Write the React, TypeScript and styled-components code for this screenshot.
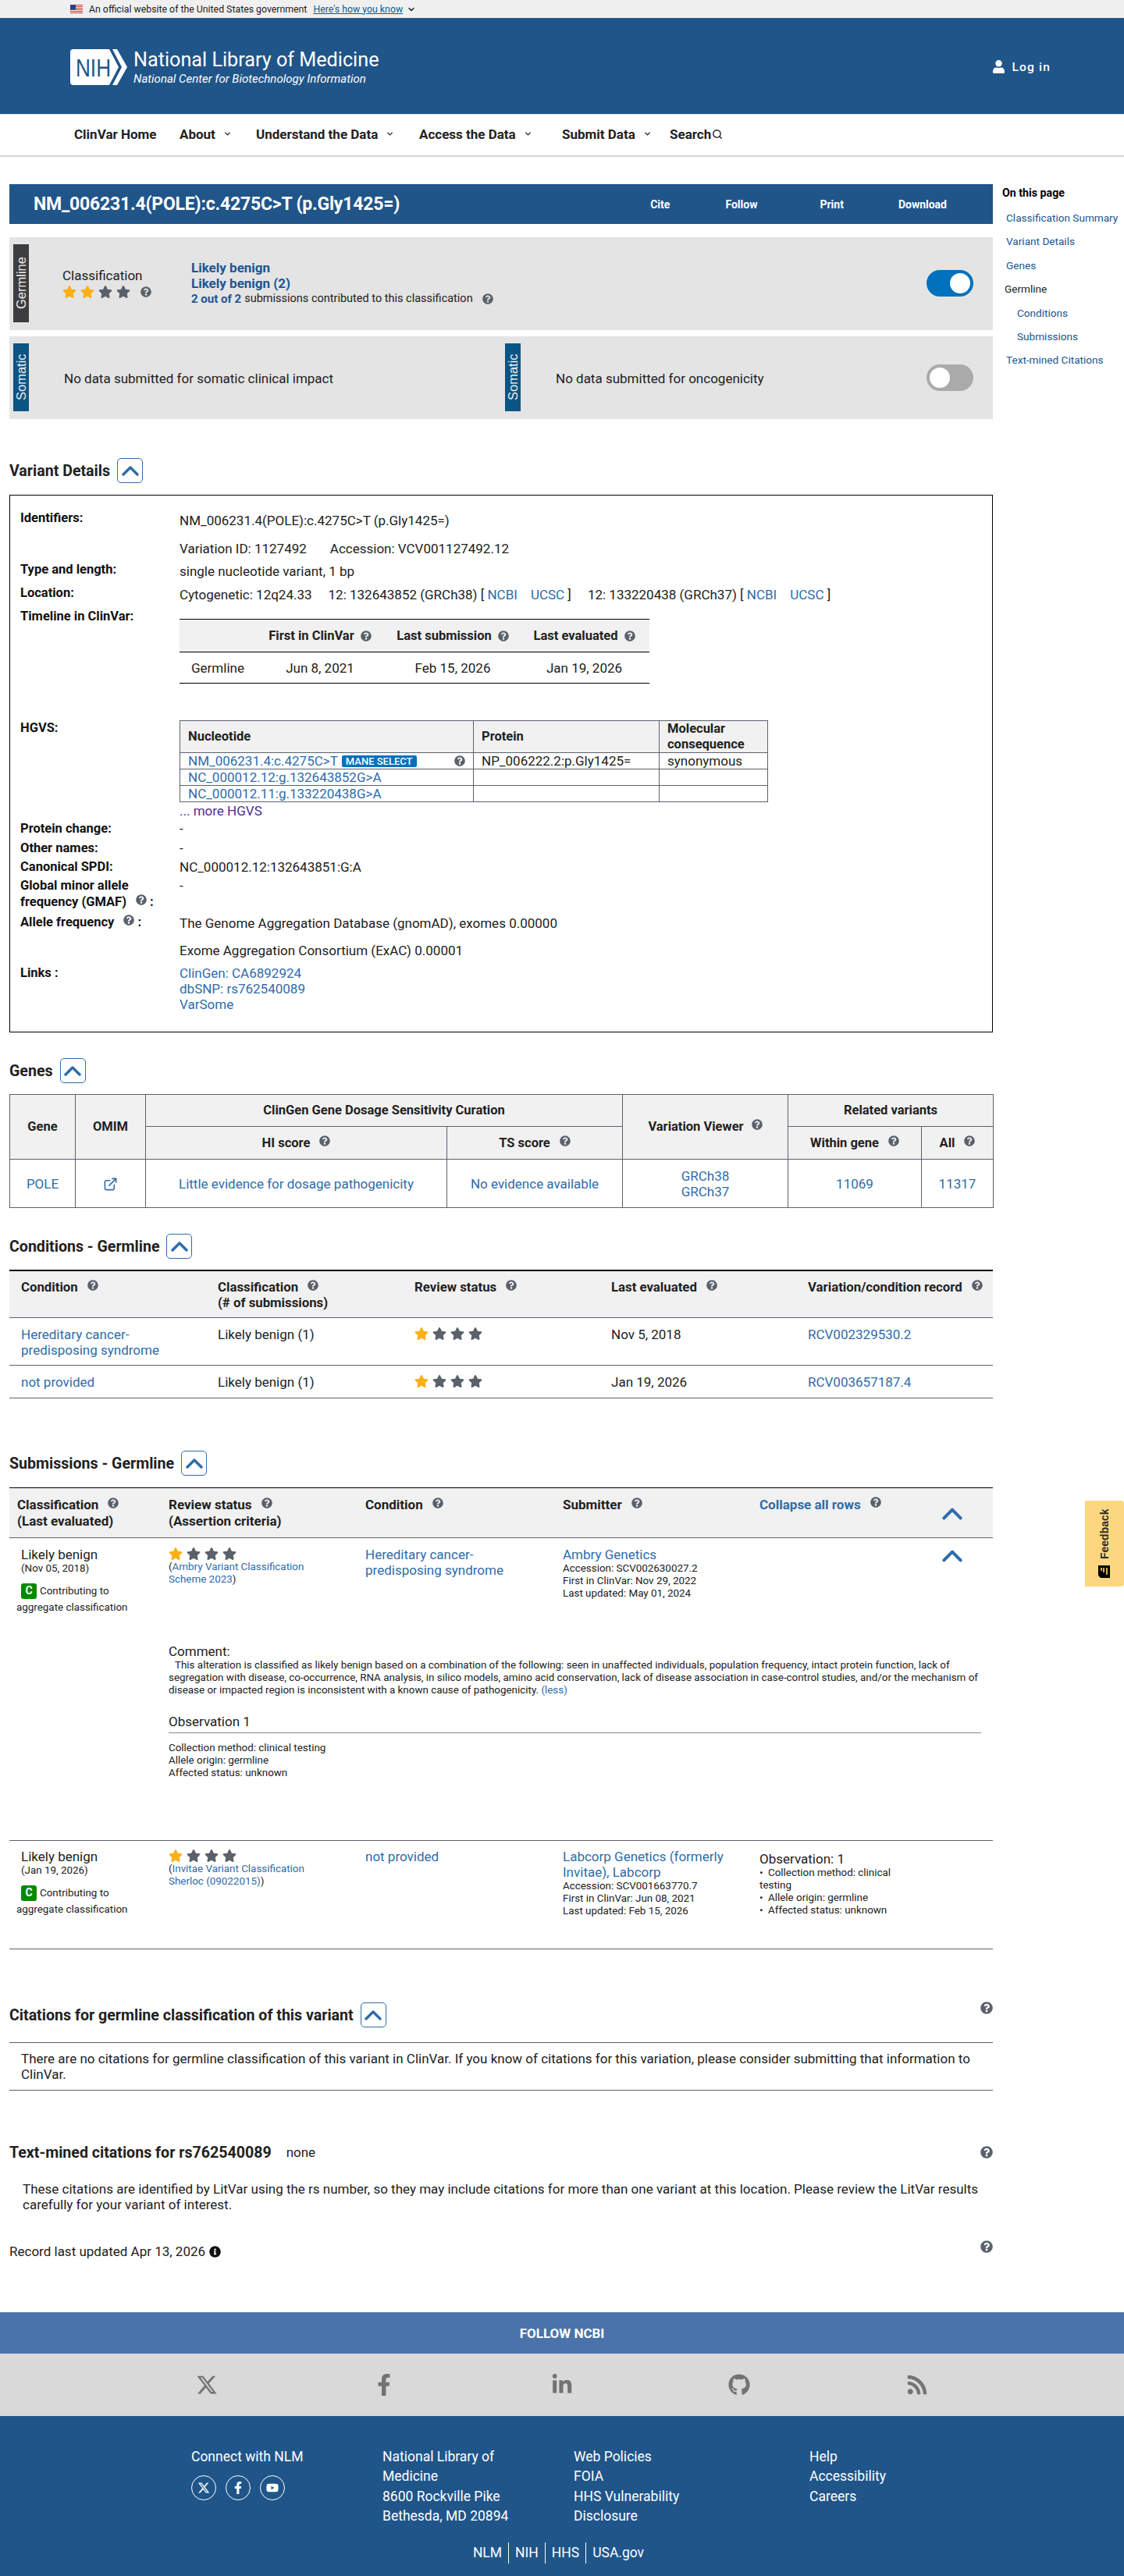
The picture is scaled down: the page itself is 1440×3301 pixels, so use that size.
import React from 'react';
import styled, { createGlobalStyle } from 'styled-components';
import { ChevronDown, Search, ExternalLink } from 'lucide-react';
import {
    FaQuestionCircle,
    FaStar,
    FaUser,
    FaFacebookF,
    FaLinkedinIn,
    FaGithub,
    FaRss,
    FaInfoCircle,
    FaYoutube,
} from 'react-icons/fa';
import { FaXTwitter } from 'react-icons/fa6';

const NAVY = '#20558a';
const LINK = '#2e6cab';
const SLATE = '#5b616b';

const GlobalStyle = createGlobalStyle`
    html, body {
        margin: 0;
        padding: 0;
        background: #fff;
    }
    body {
        font-family: Roboto, "Liberation Sans", sans-serif;
        color: #212121;
        font-size: 17px;
    }
    * {
        box-sizing: border-box;
    }
`;

const Page = styled.div`
    position: relative;
    width: 1440px;
    height: 3301px;
    overflow: hidden;
`;

const GovBanner = styled.div`
    height: 23px;
    background: #f0f0f0;
    padding-left: 90px;
    display: flex;
    align-items: center;
    font-size: 12.3px;
    color: #1b1b1b;
`;

const GovLink = styled.a`
    color: #005ea2;
    text-decoration: underline;
    margin-left: 8px;
`;

const GovChevron = styled(ChevronDown)`
    width: 12px;
    height: 12px;
    margin-left: 5px;
    stroke-width: 3;
`;

const FlagIcon = styled.svg`
    width: 16px;
    height: 11px;
    margin-right: 8px;
`;

const Header = styled.header`
    height: 124px;
    background: ${NAVY};
    border-bottom: 1px solid #dfe6ee;
    padding: 2px 94px 0 90px;
    display: flex;
    align-items: center;
    justify-content: space-between;
    color: #fff;
`;

const Brand = styled.div`
    display: flex;
    align-items: center;
    gap: 8px;
`;

const BrandText = styled.div`
    display: flex;
    flex-direction: column;
`;

const BrandTitle = styled.div`
    font-size: 25.2px;
    line-height: 30px;
`;

const BrandSub = styled.div`
    font-size: 15px;
    line-height: 18px;
    font-style: italic;
`;

const Login = styled.div`
    display: flex;
    align-items: center;
    gap: 8px;
    font-size: 15.5px;
    font-weight: 500;
    letter-spacing: 1.2px;
`;

const Nav = styled.nav`
    height: 54px;
    border-bottom: 2px solid #d6d6d6;
    padding: 0 0 3px 95px;
    display: flex;
    align-items: center;
`;

const NavItem = styled.div<{ $width: number }>`
    width: ${p => p.$width}px;
    display: flex;
    align-items: center;
    font-size: 17px;
    font-weight: 700;
    color: #212121;
`;

const NavChevron = styled(ChevronDown)`
    width: 11px;
    height: 11px;
    margin-left: 10px;
    stroke-width: 3;
`;

const NavSearch = styled(Search)`
    width: 14px;
    height: 14px;
    margin-left: 1px;
    stroke-width: 2.4;
`;

const Content = styled.div`
    display: flex;
    padding: 35px 0 0 12px;
`;

const Main = styled.main`
    width: 1260px;
`;

const Aside = styled.aside`
    margin-left: 12px;
    width: 156px;
    padding-top: 1px;
`;

const AsideTitle = styled.div`
    font-size: 14.2px;
    font-weight: 700;
    color: #000;
    line-height: 20px;
    margin-bottom: 12px;
`;

const AsideItem = styled.a<{ $indent?: number; $plain?: boolean }>`
    display: block;
    height: 30.4px;
    line-height: 20px;
    padding-left: ${p => p.$indent ?? 5}px;
    font-size: 13.6px;
    color: ${p => (p.$plain ? '#212121' : '#205493')};
`;

const TitleBar = styled.div`
    height: 51px;
    background: ${NAVY};
    color: #fff;
    padding: 0 59px 0 31px;
    display: flex;
    align-items: center;
`;

const PageTitle = styled.h1`
    margin: 0;
    font-size: 23px;
    font-weight: 700;
    letter-spacing: -0.2px;
`;

const TitleActions = styled.div`
    margin-left: auto;
    display: flex;
`;

const TitleAction = styled.a<{ $gap: number }>`
    font-size: 14px;
    font-weight: 700;
    margin-left: ${p => p.$gap}px;
`;

const Panel = styled.section<{ $top: number; $height: number }>`
    margin-top: ${p => p.$top}px;
    height: ${p => p.$height}px;
    background: #e4e4e4;
    display: flex;
    padding: 9px 25px 10px 5px;
    align-items: flex-start;
`;

const SideTag = styled.div<{ $dark?: boolean }>`
    flex: none;
    width: 20px;
    height: 100%;
    background: ${p => (p.$dark ? '#3d3d3f' : '#0b5584')};
    color: #f0f0f0;
    font-family: "Liberation Sans", Arial, sans-serif;
    font-size: 16.5px;
    writing-mode: vertical-rl;
    transform: rotate(180deg);
    display: flex;
    align-items: center;
    justify-content: center;
`;

const PanelRow = styled.div`
    align-self: stretch;
    display: flex;
    align-items: center;
`;

const ClassificationBlock = styled.div`
    width: 165px;
    margin-left: 43px;
`;

const ClassificationLabel = styled.div`
    font-size: 17px;
    line-height: 20px;
    margin-bottom: 2px;
`;

const StarRow = styled.div`
    display: flex;
    align-items: center;
    gap: 5px;
`;

const Star = styled(FaStar)<{ $on?: boolean }>`
    width: 18px;
    height: 18px;
    color: ${p => (p.$on ? '#fbb017' : SLATE)};
`;

const Help = styled(FaQuestionCircle)<{ $left?: number }>`
    flex: none;
    width: 14px;
    height: 14px;
    margin-left: ${p => p.$left ?? 8}px;
    color: ${SLATE};
    vertical-align: 1px;
`;

const Summary = styled.div`
    line-height: 20px;
`;

const SummaryStrong = styled.div`
    font-size: 17px;
    font-weight: 700;
    color: #205493;
`;

const SummaryLine = styled.div`
    font-size: 14.5px;
    display: flex;
    align-items: center;
`;

const SummaryCount = styled.span`
    font-weight: 700;
    color: #205493;
    font-size: 15px;
    margin-right: 4px;
`;

const Toggle = styled.div<{ $on?: boolean }>`
    width: 60px;
    height: 34px;
    border-radius: 17px;
    background: ${p => (p.$on ? '#0071bc' : '#aaaaaa')};
    display: flex;
    align-items: center;
    justify-content: ${p => (p.$on ? 'flex-end' : 'flex-start')};
    padding: 0 4px;
`;

const ToggleKnob = styled.div`
    width: 26px;
    height: 26px;
    border-radius: 50%;
    background: #fff;
`;

const ToggleSlot = styled.div`
    margin-left: auto;
    align-self: center;
    display: flex;
`;

const SomaticCell = styled.div<{ $width: number }>`
    width: ${p => p.$width}px;
    height: 100%;
    display: flex;
    align-items: center;
`;

const SomaticText = styled.div`
    margin-left: 45px;
    font-size: 17px;
    padding-top: 3px;
`;

const SectionHead = styled.div<{ $top: number }>`
    margin-top: ${p => p.$top}px;
    height: 32px;
    display: flex;
    align-items: center;
`;

const SectionTitle = styled.h2`
    margin: 0;
    font-size: 19.6px;
    font-weight: 700;
    color: #212121;
`;

const CollapseButton = styled.button`
    width: 33px;
    height: 32px;
    margin-left: 9px;
    padding: 0;
    background: #fff;
    border: 1px solid ${LINK};
    border-radius: 5px;
    display: flex;
    align-items: center;
    justify-content: center;
`;

const CaretUp = styled.svg<{ $w?: number }>`
    width: ${p => p.$w ?? 22}px;
    height: ${p => Math.round((p.$w ?? 22) * 0.6)}px;
    fill: none;
    stroke: ${LINK};
    stroke-width: 3.4;
    stroke-linecap: round;
    stroke-linejoin: round;
`;

const DetailsBox = styled.div`
    margin-top: 15px;
    height: 689px;
    border: 1px solid #000;
    padding: 19px 0 0 13px;
`;

const DetailRow = styled.div<{ $height: number }>`
    height: ${p => p.$height}px;
    display: grid;
    grid-template-columns: 204px 1fr;
    align-items: start;
`;

const DetailLabel = styled.div`
    font-size: 16.5px;
    font-weight: 700;
    line-height: 20.5px;
    color: #111;
`;

const DetailValue = styled.div<{ $lh?: number }>`
    font-size: 17px;
    line-height: ${p => p.$lh ?? 24}px;
`;

const AlleleLine = styled.div`
    margin-bottom: 13px;
`;

const Gap = styled.span<{ $w?: number }>`
    display: inline-block;
    width: ${p => p.$w ?? 21}px;
`;

const Link = styled.a`
    color: ${LINK};
`;

const BlockLink = styled.a`
    display: block;
    color: ${LINK};
`;

const MoreLink = styled.a`
    display: inline-block;
    color: #4c2c92;
    font-size: 17px;
    line-height: 20px;
    margin-top: 1px;
`;

const TimelineGrid = styled.div`
    margin-top: 13px;
    width: 602px;
    border-top: 1px solid #000;
    border-bottom: 1px solid #000;
    display: grid;
    grid-template-columns: 95px 170px 170px 167px;
`;

const TimelineHead = styled.div`
    height: 42px;
    background: #f1f1f1;
    border-bottom: 1px solid #000;
    font-weight: 700;
    display: flex;
    align-items: center;
    justify-content: center;
    font-size: 16.5px;
`;

const TimelineCell = styled.div<{ $first?: boolean }>`
    height: 39px;
    display: flex;
    align-items: center;
    justify-content: ${p => (p.$first ? 'flex-start' : 'center')};
    padding-left: ${p => (p.$first ? 15 : 0)}px;
    font-size: 17px;
`;

const HgvsTable = styled.table`
    display: table;
    width: 753px;
    table-layout: fixed;
    border-collapse: collapse;
    font-size: 17px;
    th, td {
        border: 1px solid ${SLATE};
        padding: 0 10px;
        text-align: left;
        line-height: 20px;
    }
    th {
        background: #f1f1f1;
        height: 41px;
        font-weight: 700;
        font-size: 16.5px;
    }
    td {
        height: 21px;
    }
`;

const HgvsFirst = styled.div`
    height: 20px;
    display: flex;
    align-items: center;
    justify-content: space-between;
`;

const HgvsName = styled.div`
    display: flex;
    align-items: center;
`;

const ManeBadge = styled.span`
    display: inline-block;
    background: #0071bc;
    color: #fff;
    font-size: 13px;
    font-weight: 500;
    line-height: 15px;
    padding: 0 5px;
    border-radius: 2px;
    margin-left: 5px;
`;

const GenesTable = styled.table`
    margin-top: 14px;
    width: 1260px;
    table-layout: fixed;
    border-collapse: collapse;
    font-size: 17px;
    th, td {
        border: 1px solid ${SLATE};
        text-align: center;
        padding: 0;
        line-height: 20px;
    }
    th {
        background: #f1f1f1;
        font-weight: 700;
        font-size: 16.5px;
    }
`;

const GeneHeadRow = styled.tr<{ $height: number }>`
    height: ${p => p.$height}px;
`;

const OmimIcon = styled(ExternalLink)`
    width: 19px;
    height: 19px;
    color: ${LINK};
    vertical-align: middle;
`;

const FiveGrid = styled.div`
    display: grid;
    grid-template-columns: repeat(5, 252px);
`;

const ConditionsHead = styled(FiveGrid)`
    margin-top: 14px;
    height: 62px;
    background: #f1f1f1;
    border-top: 2px solid #000;
    border-bottom: 1px solid ${SLATE};
    padding-top: 10px;
`;

const ConditionsHeadCell = styled.div`
    padding-left: 15px;
    font-size: 16.8px;
    font-weight: 700;
    line-height: 20px;
`;

const ConditionsRow = styled(FiveGrid)<{ $height: number }>`
    height: ${p => p.$height}px;
    border-bottom: 1px solid ${SLATE};
    padding-top: 11px;
`;

const ConditionsCell = styled.div`
    padding-left: 15px;
    padding-right: 30px;
    font-size: 17px;
    line-height: 20px;
`;

const SubGrid = styled.div`
    display: grid;
    grid-template-columns: 204px 252px 253px 252px 299px;
`;

const SubHead = styled(SubGrid)`
    margin-top: 15px;
    height: 65px;
    background: #f1f1f1;
    border-top: 1px solid #000;
    border-bottom: 1px solid ${SLATE};
    padding-top: 11px;
`;

const SubHeadCell = styled.div`
    font-size: 17px;
    font-weight: 700;
    line-height: 21px;
`;

const SubHeadFirst = styled(SubHeadCell)`
    padding-left: 10px;
`;

const CollapseAll = styled.div`
    display: flex;
    align-items: flex-start;
    font-size: 17px;
    font-weight: 700;
    color: ${LINK};
    line-height: 21px;
    position: relative;
`;

const RowCaret = styled.div<{ $top: number }>`
    position: absolute;
    left: 234px;
    top: ${p => p.$top}px;
`;

const SubRow = styled.div<{ $height: number; $top: number }>`
    height: ${p => p.$height}px;
    padding-top: ${p => p.$top}px;
    border-bottom: 1px solid ${SLATE};
`;

const SubCellFirst = styled.div`
    padding-left: 15px;
`;

const SubName = styled.div`
    font-size: 17px;
    line-height: 20px;
`;

const SubSmall = styled.div`
    font-size: 13.4px;
    line-height: 16px;
`;

const Contributing = styled.div`
    margin: 10px 0 0 -6px;
    font-size: 13.4px;
    line-height: 21px;
`;

const ContributingTop = styled.div`
    display: flex;
    align-items: center;
    padding-left: 6px;
`;

const CBadge = styled.span`
    width: 20px;
    height: 20px;
    margin-right: 4px;
    background: #008a00;
    color: #fff;
    border-radius: 3px;
    font-size: 14px;
    font-weight: 700;
    display: flex;
    align-items: center;
    justify-content: center;
`;

const CriteriaLine = styled(SubSmall)`
    padding-right: 60px;
`;

const ConditionLink = styled.a`
    display: block;
    font-size: 17px;
    line-height: 20px;
    color: ${LINK};
    padding-right: 60px;
`;

const SubmitterLink = styled(ConditionLink)`
    padding-right: 0;
`;

const SubTop = styled(SubGrid)`
    height: 124px;
`;

const SubBody = styled.div`
    margin-left: 204px;
    width: 1041px;
`;

const CommentTitle = styled.div`
    font-size: 17px;
    line-height: 20px;
`;

const CommentText = styled.div`
    font-size: 13.4px;
    line-height: 16px;
    text-indent: 8px;
    width: 1037px;
`;

const ObservationTitle = styled.div`
    margin-top: 22px;
    font-size: 17px;
    line-height: 20px;
`;

const ObservationRule = styled.div`
    height: 1px;
    background: #888;
    margin: 4px 0 11px;
`;

const ObsBlock = styled.div`
    padding: 4px 40px 0 0;
`;

const ObsTitle = styled.div`
    font-size: 17px;
    line-height: 19px;
`;

const Bullet = styled.span`
    display: inline-block;
    width: 11px;
`;

const SpacedHead = styled.div<{ $top: number }>`
    margin-top: ${p => p.$top}px;
    height: 32px;
    display: flex;
    align-items: center;
    justify-content: space-between;
`;

const HeadGroup = styled.div`
    display: flex;
    align-items: center;
`;

const NoneText = styled.span`
    margin-left: 19px;
    font-size: 17px;
`;

const RightHelp = styled(FaQuestionCircle)<{ $lift: number }>`
    width: 16px;
    height: 16px;
    color: ${SLATE};
    margin-top: ${p => -p.$lift}px;
`;

const RuledText = styled.div`
    margin-top: 19px;
    border-top: 1px solid ${SLATE};
    border-bottom: 1px solid ${SLATE};
    height: 62px;
    padding: 10px 15px 0;
    font-size: 17px;
    line-height: 20px;
`;

const PlainText = styled.div`
    margin-top: 21px;
    padding: 0 0 0 17px;
    font-size: 17px;
    line-height: 20px;
`;

const RecordText = styled.span`
    font-size: 17px;
`;

const InfoDot = styled(FaInfoCircle)`
    width: 15px;
    height: 15px;
    margin-left: 5px;
    color: #111;
`;

const FollowBar = styled.div`
    margin-top: 62px;
    height: 53px;
    background: #4a73a9;
    color: #fff;
    font-size: 17px;
    font-weight: 700;
    display: flex;
    align-items: center;
    justify-content: center;
`;

const SocialBar = styled.div`
    height: 80px;
    background: #d9d9d9;
    display: grid;
    grid-template-columns: repeat(5, 227.5px);
    padding-left: 151px;
    align-items: center;
    justify-items: center;
    color: #737373;
    font-size: 28px;
    svg {
        display: block;
    }
`;

const Footer = styled.footer`
    height: 208px;
    background: ${NAVY};
    color: #fff;
    padding-top: 40px;
    font-size: 17.5px;
`;

const FooterColumns = styled.div`
    display: grid;
    grid-template-columns: 245px 245px 302px 200px;
    margin-left: 245px;
    height: 122px;
    line-height: 25.3px;
`;

const FooterLine = styled.div`
    max-width: 175px;
`;

const CircleRow = styled.div`
    display: flex;
    gap: 12px;
    margin-top: 11px;
`;

const Circle = styled.span`
    width: 32px;
    height: 32px;
    border: 1.5px solid #fff;
    border-radius: 50%;
    display: flex;
    align-items: center;
    justify-content: center;
    font-size: 16px;
`;

const GovLinks = styled.div`
    display: flex;
    justify-content: center;
    height: 27px;
    padding-right: 9px;
`;

const GovLinkItem = styled.a<{ $last?: boolean }>`
    padding: 0 8px;
    line-height: 27px;
    border-right: ${p => (p.$last ? 'none' : '1px solid #fff')};
`;

const Feedback = styled.div`
    position: absolute;
    top: 1923px;
    right: 0;
    width: 50px;
    height: 110px;
    background: #fdd77f;
    border-radius: 4px 0 0 4px;
    display: flex;
    align-items: center;
    justify-content: center;
    gap: 7px;
    writing-mode: vertical-rl;
    transform: rotate(180deg);
    font-family: "Liberation Sans", Arial, sans-serif;
    font-size: 14px;
    font-weight: 700;
    color: #2a2a2a;
`;

const FeedbackGlyph = styled.svg`
    width: 17px;
    height: 18px;
`;

const Stars: React.FC<{ on: number }> = ({ on }) => (
    <StarRow>
        {[0, 1, 2, 3].map(i => (
            <Star key={i} $on={i < on} />
        ))}
    </StarRow>
);

const Caret: React.FC<{ w?: number }> = ({ w }) => (
    <CaretUp $w={w} viewBox="0 0 22 13">
        <path d="M2 11 L11 2 L20 11" />
    </CaretUp>
);

const Collapse = () => (
    <CollapseButton aria-label="collapse">
        <Caret />
    </CollapseButton>
);

const NihLogo = () => (
    <svg width="73" height="46" viewBox="0 0 73 46">
        <path d="M4 0H50L62 23L50 46H4Q0 46 0 42V4Q0 0 4 0Z" fill="#fff" />
        <path d="M54 0H60L73 23L60 46H54L66 23Z" fill="#fff" />
        <text
            x="7"
            y="35"
            fontFamily='"Liberation Sans", sans-serif'
            fontSize="31"
            fill="#20558a"
            textLength="45"
            lengthAdjust="spacingAndGlyphs"
        >
            NIH
        </text>
    </svg>
);

const App: React.FC = () => {
    const navItems: [string, number, boolean][] = [
        ['ClinVar Home', 135, false],
        ['About', 98, true],
        ['Understand the Data', 209, true],
        ['Access the Data', 183, true],
        ['Submit Data', 138, true],
    ];
    const asideItems: [string, number?, boolean?][] = [
        ['Classification Summary'],
        ['Variant Details'],
        ['Genes'],
        ['Germline', 3, true],
        ['Conditions', 19],
        ['Submissions', 19],
        ['Text-mined Citations'],
    ];

    return (
        <Page>
            <GlobalStyle />
            <GovBanner>
                <FlagIcon viewBox="0 0 16 11">
                    <rect width="16" height="11" fill="#fff" />
                    {[0, 2, 4, 6, 8, 10].map(y => (
                        <rect key={y} y={y} width="16" height="1" fill="#c9322b" />
                    ))}
                    <rect width="7" height="6" fill="#2c3e8c" />
                </FlagIcon>
                An official website of the United States government
                <GovLink>Here's how you know</GovLink>
                <GovChevron />
            </GovBanner>

            <Header>
                <Brand>
                    <NihLogo />
                    <BrandText>
                        <BrandTitle>National Library of Medicine</BrandTitle>
                        <BrandSub>National Center for Biotechnology Information</BrandSub>
                    </BrandText>
                </Brand>
                <Login>
                    <FaUser size={17} />
                    Log in
                </Login>
            </Header>

            <Nav>
                {navItems.map(([label, width, hasMenu]) => (
                    <NavItem key={label} $width={width}>
                        {label}
                        {hasMenu && <NavChevron />}
                    </NavItem>
                ))}
                <NavItem $width={80}>
                    Search
                    <NavSearch />
                </NavItem>
            </Nav>

            <Content>
                <Main>
                    <TitleBar>
                        <PageTitle>NM_006231.4(POLE):c.4275C&gt;T (p.Gly1425=)</PageTitle>
                        <TitleActions>
                            <TitleAction $gap={0}>Cite</TitleAction>
                            <TitleAction $gap={71}>Follow</TitleAction>
                            <TitleAction $gap={80}>Print</TitleAction>
                            <TitleAction $gap={70}>Download</TitleAction>
                        </TitleActions>
                    </TitleBar>

                    <Panel $top={17} $height={119}>
                        <SideTag $dark>Germline</SideTag>
                        <PanelRow>
                            <ClassificationBlock>
                                <ClassificationLabel>Classification</ClassificationLabel>
                                <StarRow>
                                    <Stars on={2} />
                                    <Help $left={8} />
                                </StarRow>
                            </ClassificationBlock>
                            <Summary>
                                <SummaryStrong>Likely benign</SummaryStrong>
                                <SummaryStrong>Likely benign (2)</SummaryStrong>
                                <SummaryLine>
                                    <SummaryCount>2 out of 2</SummaryCount>
                                    submissions contributed to this classification
                                    <Help $left={12} />
                                </SummaryLine>
                            </Summary>
                        </PanelRow>
                        <ToggleSlot>
                            <Toggle $on>
                                <ToggleKnob />
                            </Toggle>
                        </ToggleSlot>
                    </Panel>

                    <Panel $top={8} $height={106}>
                        <SomaticCell $width={630}>
                            <SideTag>Somatic</SideTag>
                            <SomaticText>No data submitted for somatic clinical impact</SomaticText>
                        </SomaticCell>
                        <SomaticCell $width={400}>
                            <SideTag>Somatic</SideTag>
                            <SomaticText>No data submitted for oncogenicity</SomaticText>
                        </SomaticCell>
                        <ToggleSlot>
                            <Toggle>
                                <ToggleKnob />
                            </Toggle>
                        </ToggleSlot>
                    </Panel>

                    <SectionHead $top={50}>
                        <SectionTitle>Variant Details</SectionTitle>
                        <Collapse />
                    </SectionHead>

                    <DetailsBox>
                        <DetailRow $height={37}>
                            <DetailLabel>Identifiers:</DetailLabel>
                            <DetailValue $lh={26}>NM_006231.4(POLE):c.4275C&gt;T (p.Gly1425=)</DetailValue>
                        </DetailRow>
                        <DetailRow $height={29}>
                            <div />
                            <DetailValue>
                                Variation ID: 1127492
                                <Gap $w={30} />
                                Accession: VCV001127492.12
                            </DetailValue>
                        </DetailRow>
                        <DetailRow $height={30}>
                            <DetailLabel>Type and length:</DetailLabel>
                            <DetailValue>single nucleotide variant, 1 bp</DetailValue>
                        </DetailRow>
                        <DetailRow $height={30}>
                            <DetailLabel>Location:</DetailLabel>
                            <DetailValue>
                                Cytogenetic: 12q24.33
                                <Gap />
                                12: 132643852 (GRCh38) [ <Link>NCBI</Link>
                                <Gap $w={17} />
                                <Link>UCSC</Link> ]
                                <Gap />
                                12: 133220438 (GRCh37) [ <Link>NCBI</Link>
                                <Gap $w={17} />
                                <Link>UCSC</Link> ]
                            </DetailValue>
                        </DetailRow>
                        <DetailRow $height={143}>
                            <DetailLabel>Timeline in ClinVar:</DetailLabel>
                            <TimelineGrid>
                                <TimelineHead />
                                <TimelineHead>
                                    First in ClinVar
                                    <Help />
                                </TimelineHead>
                                <TimelineHead>
                                    Last submission
                                    <Help />
                                </TimelineHead>
                                <TimelineHead>
                                    Last evaluated
                                    <Help />
                                </TimelineHead>
                                <TimelineCell $first>Germline</TimelineCell>
                                <TimelineCell>Jun 8, 2021</TimelineCell>
                                <TimelineCell>Feb 15, 2026</TimelineCell>
                                <TimelineCell>Jan 19, 2026</TimelineCell>
                            </TimelineGrid>
                        </DetailRow>
                        <DetailRow $height={129}>
                            <DetailLabel>HGVS:</DetailLabel>
                            <div>
                                <HgvsTable>
                                    <colgroup>
                                        <col width="376" />
                                        <col width="238" />
                                        <col width="139" />
                                    </colgroup>
                                    <thead>
                                        <tr>
                                            <th>Nucleotide</th>
                                            <th>Protein</th>
                                            <th>Molecular consequence</th>
                                        </tr>
                                    </thead>
                                    <tbody>
                                        <tr>
                                            <td>
                                                <HgvsFirst>
                                                    <HgvsName>
                                                        <Link>NM_006231.4:c.4275C&gt;T</Link>
                                                        <ManeBadge>MANE SELECT</ManeBadge>
                                                    </HgvsName>
                                                    <Help $left={0} />
                                                </HgvsFirst>
                                            </td>
                                            <td>NP_006222.2:p.Gly1425=</td>
                                            <td>synonymous</td>
                                        </tr>
                                        <tr>
                                            <td>
                                                <Link>NC_000012.12:g.132643852G&gt;A</Link>
                                            </td>
                                            <td />
                                            <td />
                                        </tr>
                                        <tr>
                                            <td>
                                                <Link>NC_000012.11:g.133220438G&gt;A</Link>
                                            </td>
                                            <td />
                                            <td />
                                        </tr>
                                    </tbody>
                                </HgvsTable>
                                <MoreLink>... more HGVS</MoreLink>
                            </div>
                        </DetailRow>
                        <DetailRow $height={25}>
                            <DetailLabel>Protein change:</DetailLabel>
                            <DetailValue $lh={20}>-</DetailValue>
                        </DetailRow>
                        <DetailRow $height={24}>
                            <DetailLabel>Other names:</DetailLabel>
                            <DetailValue $lh={20}>-</DetailValue>
                        </DetailRow>
                        <DetailRow $height={24}>
                            <DetailLabel>Canonical SPDI:</DetailLabel>
                            <DetailValue $lh={20}>NC_000012.12:132643851:G:A</DetailValue>
                        </DetailRow>
                        <DetailRow $height={47}>
                            <DetailLabel>
                                Global minor allele
                                <br />
                                frequency (GMAF)
                                <Help $left={12} />
                                {' :'}
                            </DetailLabel>
                            <DetailValue $lh={20}>-</DetailValue>
                        </DetailRow>
                        <DetailRow $height={65}>
                            <DetailLabel>
                                Allele frequency
                                <Help $left={12} />
                                {' :'}
                            </DetailLabel>
                            <DetailValue $lh={22}>
                                <AlleleLine>The Genome Aggregation Database (gnomAD), exomes 0.00000</AlleleLine>
                                Exome Aggregation Consortium (ExAC) 0.00001
                            </DetailValue>
                        </DetailRow>
                        <DetailRow $height={64}>
                            <DetailLabel>Links :</DetailLabel>
                            <DetailValue $lh={20}>
                                <BlockLink>ClinGen: CA6892924</BlockLink>
                                <BlockLink>dbSNP: rs762540089</BlockLink>
                                <BlockLink>VarSome</BlockLink>
                            </DetailValue>
                        </DetailRow>
                    </DetailsBox>

                    <SectionHead $top={33}>
                        <SectionTitle>Genes</SectionTitle>
                        <Collapse />
                    </SectionHead>

                    <GenesTable>
                        <colgroup>
                            <col width="84" />
                            <col width="90" />
                            <col width="386" />
                            <col width="225" />
                            <col width="212" />
                            <col width="171" />
                            <col width="92" />
                        </colgroup>
                        <thead>
                            <GeneHeadRow $height={41}>
                                <th rowSpan={2}>Gene</th>
                                <th rowSpan={2}>OMIM</th>
                                <th colSpan={2}>ClinGen Gene Dosage Sensitivity Curation</th>
                                <th rowSpan={2}>
                                    Variation Viewer
                                    <Help $left={10} />
                                </th>
                                <th colSpan={2}>Related variants</th>
                            </GeneHeadRow>
                            <GeneHeadRow $height={42}>
                                <th>
                                    HI score
                                    <Help $left={12} />
                                </th>
                                <th>
                                    TS score
                                    <Help $left={12} />
                                </th>
                                <th>
                                    Within gene
                                    <Help $left={12} />
                                </th>
                                <th>
                                    All
                                    <Help $left={12} />
                                </th>
                            </GeneHeadRow>
                        </thead>
                        <tbody>
                            <GeneHeadRow $height={62}>
                                <td>
                                    <Link>POLE</Link>
                                </td>
                                <td>
                                    <OmimIcon />
                                </td>
                                <td>
                                    <Link>Little evidence for dosage pathogenicity</Link>
                                </td>
                                <td>
                                    <Link>No evidence available</Link>
                                </td>
                                <td>
                                    <BlockLink>GRCh38</BlockLink>
                                    <BlockLink>GRCh37</BlockLink>
                                </td>
                                <td>
                                    <Link>11069</Link>
                                </td>
                                <td>
                                    <Link>11317</Link>
                                </td>
                            </GeneHeadRow>
                        </tbody>
                    </GenesTable>

                    <SectionHead $top={33}>
                        <SectionTitle>Conditions - Germline</SectionTitle>
                        <Collapse />
                    </SectionHead>

                    <ConditionsHead>
                        <ConditionsHeadCell>
                            Condition
                            <Help $left={12} />
                        </ConditionsHeadCell>
                        <ConditionsHeadCell>
                            Classification
                            <Help $left={12} />
                            <br />
                            (# of submissions)
                        </ConditionsHeadCell>
                        <ConditionsHeadCell>
                            Review status
                            <Help $left={12} />
                        </ConditionsHeadCell>
                        <ConditionsHeadCell>
                            Last evaluated
                            <Help $left={12} />
                        </ConditionsHeadCell>
                        <ConditionsHeadCell>
                            Variation/condition record
                            <Help $left={12} />
                        </ConditionsHeadCell>
                    </ConditionsHead>
                    <ConditionsRow $height={61}>
                        <ConditionsCell>
                            <Link>Hereditary cancer-predisposing syndrome</Link>
                        </ConditionsCell>
                        <ConditionsCell>Likely benign (1)</ConditionsCell>
                        <ConditionsCell>
                            <Stars on={1} />
                        </ConditionsCell>
                        <ConditionsCell>Nov 5, 2018</ConditionsCell>
                        <ConditionsCell>
                            <Link>RCV002329530.2</Link>
                        </ConditionsCell>
                    </ConditionsRow>
                    <ConditionsRow $height={42}>
                        <ConditionsCell>
                            <Link>not provided</Link>
                        </ConditionsCell>
                        <ConditionsCell>Likely benign (1)</ConditionsCell>
                        <ConditionsCell>
                            <Stars on={1} />
                        </ConditionsCell>
                        <ConditionsCell>Jan 19, 2026</ConditionsCell>
                        <ConditionsCell>
                            <Link>RCV003657187.4</Link>
                        </ConditionsCell>
                    </ConditionsRow>

                    <SectionHead $top={67}>
                        <SectionTitle>Submissions - Germline</SectionTitle>
                        <Collapse />
                    </SectionHead>

                    <SubHead>
                        <SubHeadFirst>
                            Classification
                            <Help $left={12} />
                            <br />
                            (Last evaluated)
                        </SubHeadFirst>
                        <SubHeadCell>
                            Review status
                            <Help $left={12} />
                            <br />
                            (Assertion criteria)
                        </SubHeadCell>
                        <SubHeadCell>
                            Condition
                            <Help $left={12} />
                        </SubHeadCell>
                        <SubHeadCell>
                            Submitter
                            <Help $left={12} />
                        </SubHeadCell>
                        <CollapseAll>
                            Collapse all rows
                            <Help $left={12} />
                            <RowCaret $top={14}>
                                <Caret w={26} />
                            </RowCaret>
                        </CollapseAll>
                    </SubHead>

                    <SubRow $height={388} $top={11}>
                        <SubTop>
                            <SubCellFirst>
                                <SubName>Likely benign</SubName>
                                <SubSmall>(Nov 05, 2018)</SubSmall>
                                <Contributing>
                                    <ContributingTop>
                                        <CBadge>C</CBadge>
                                        Contributing to
                                    </ContributingTop>
                                    aggregate classification
                                </Contributing>
                            </SubCellFirst>
                            <div>
                                <Stars on={1} />
                                <CriteriaLine>
                                    (<Link>Ambry Variant Classification Scheme 2023</Link>)
                                </CriteriaLine>
                            </div>
                            <ConditionLink>Hereditary cancer-predisposing syndrome</ConditionLink>
                            <div>
                                <SubmitterLink>Ambry Genetics</SubmitterLink>
                                <SubSmall>Accession: SCV002630027.2</SubSmall>
                                <SubSmall>First in ClinVar: Nov 29, 2022</SubSmall>
                                <SubSmall>Last updated: May 01, 2024</SubSmall>
                            </div>
                            <CollapseAll>
                                <RowCaret $top={4}>
                                    <Caret w={26} />
                                </RowCaret>
                            </CollapseAll>
                        </SubTop>
                        <SubBody>
                            <CommentTitle>Comment:</CommentTitle>
                            <CommentText>
                                This alteration is classified as likely benign based on a combination of the following: seen in unaffected individuals, population frequency, intact protein function, lack of segregation with disease, co-occurrence, RNA analysis, in silico models, amino acid conservation, lack of disease association in case-control studies, and/or the mechanism of disease or impacted region is inconsistent with a known cause of pathogenicity. <Link>(less)</Link>
                            </CommentText>
                            <ObservationTitle>Observation 1</ObservationTitle>
                            <ObservationRule />
                            <SubSmall>Collection method: clinical testing</SubSmall>
                            <SubSmall>Allele origin: germline</SubSmall>
                            <SubSmall>Affected status: unknown</SubSmall>
                        </SubBody>
                    </SubRow>

                    <SubRow $height={139} $top={10}>
                        <SubGrid>
                            <SubCellFirst>
                                <SubName>Likely benign</SubName>
                                <SubSmall>(Jan 19, 2026)</SubSmall>
                                <Contributing>
                                    <ContributingTop>
                                        <CBadge>C</CBadge>
                                        Contributing to
                                    </ContributingTop>
                                    aggregate classification
                                </Contributing>
                            </SubCellFirst>
                            <div>
                                <Stars on={1} />
                                <CriteriaLine>
                                    (<Link>Invitae Variant Classification Sherloc (09022015)</Link>)
                                </CriteriaLine>
                            </div>
                            <ConditionLink>not provided</ConditionLink>
                            <div>
                                <SubmitterLink>Labcorp Genetics (formerly Invitae), Labcorp</SubmitterLink>
                                <SubSmall>Accession: SCV001663770.7</SubSmall>
                                <SubSmall>First in ClinVar: Jun 08, 2021</SubSmall>
                                <SubSmall>Last updated: Feb 15, 2026</SubSmall>
                            </div>
                            <ObsBlock>
                                <ObsTitle>Observation: 1</ObsTitle>
                                <SubSmall>
                                    <Bullet>•</Bullet>Collection method: clinical
                                    <br />
                                    testing
                                </SubSmall>
                                <SubSmall>
                                    <Bullet>•</Bullet>Allele origin: germline
                                </SubSmall>
                                <SubSmall>
                                    <Bullet>•</Bullet>Affected status: unknown
                                </SubSmall>
                            </ObsBlock>
                        </SubGrid>
                    </SubRow>

                    <SpacedHead $top={68}>
                        <HeadGroup>
                            <SectionTitle>Citations for germline classification of this variant</SectionTitle>
                            <Collapse />
                        </HeadGroup>
                        <RightHelp $lift={18} />
                    </SpacedHead>
                    <RuledText>
                        There are no citations for germline classification of this variant in ClinVar. If you know of citations for this variation, please consider submitting that information to ClinVar.
                    </RuledText>

                    <SpacedHead $top={63}>
                        <HeadGroup>
                            <SectionTitle>Text-mined citations for rs762540089</SectionTitle>
                            <NoneText>none</NoneText>
                        </HeadGroup>
                        <RightHelp $lift={0} />
                    </SpacedHead>
                    <PlainText>
                        These citations are identified by LitVar using the rs number, so they may include citations for more than one variant at this location. Please review the LitVar results carefully for your variant of interest.
                    </PlainText>

                    <SpacedHead $top={34}>
                        <HeadGroup>
                            <RecordText>Record last updated Apr 13, 2026</RecordText>
                            <InfoDot />
                        </HeadGroup>
                        <RightHelp $lift={12} />
                    </SpacedHead>
                </Main>
                <Aside>
                    <AsideTitle>On this page</AsideTitle>
                    {asideItems.map(([label, indent, plain]) => (
                        <AsideItem key={label} $indent={indent} $plain={plain}>
                            {label}
                        </AsideItem>
                    ))}
                </Aside>
            </Content>

            <FollowBar>FOLLOW NCBI</FollowBar>
            <SocialBar>
                <FaXTwitter />
                <FaFacebookF />
                <FaLinkedinIn />
                <FaGithub />
                <FaRss />
            </SocialBar>
            <Footer>
                <FooterColumns>
                    <div>
                        <div>Connect with NLM</div>
                        <CircleRow>
                            <Circle>
                                <FaXTwitter />
                            </Circle>
                            <Circle>
                                <FaFacebookF />
                            </Circle>
                            <Circle>
                                <FaYoutube />
                            </Circle>
                        </CircleRow>
                    </div>
                    <div>
                        <FooterLine>National Library of Medicine</FooterLine>
                        <FooterLine>8600 Rockville Pike</FooterLine>
                        <FooterLine>Bethesda, MD 20894</FooterLine>
                    </div>
                    <div>
                        <FooterLine>Web Policies</FooterLine>
                        <FooterLine>FOIA</FooterLine>
                        <FooterLine>HHS Vulnerability Disclosure</FooterLine>
                    </div>
                    <div>
                        <FooterLine>Help</FooterLine>
                        <FooterLine>Accessibility</FooterLine>
                        <FooterLine>Careers</FooterLine>
                    </div>
                </FooterColumns>
                <GovLinks>
                    <GovLinkItem>NLM</GovLinkItem>
                    <GovLinkItem>NIH</GovLinkItem>
                    <GovLinkItem>HHS</GovLinkItem>
                    <GovLinkItem $last>USA.gov</GovLinkItem>
                </GovLinks>
            </Footer>

            <Feedback>
                <FeedbackGlyph viewBox="0 0 17 18">
                    <path d="M1 1H13L16 4V17H1Z" fill="#000" />
                    <path d="M5 5V14M9 8V14M12 10V14" stroke="#fdd77f" strokeWidth="1.6" />
                </FeedbackGlyph>
                Feedback
            </Feedback>
        </Page>
    );
};

export default App;
